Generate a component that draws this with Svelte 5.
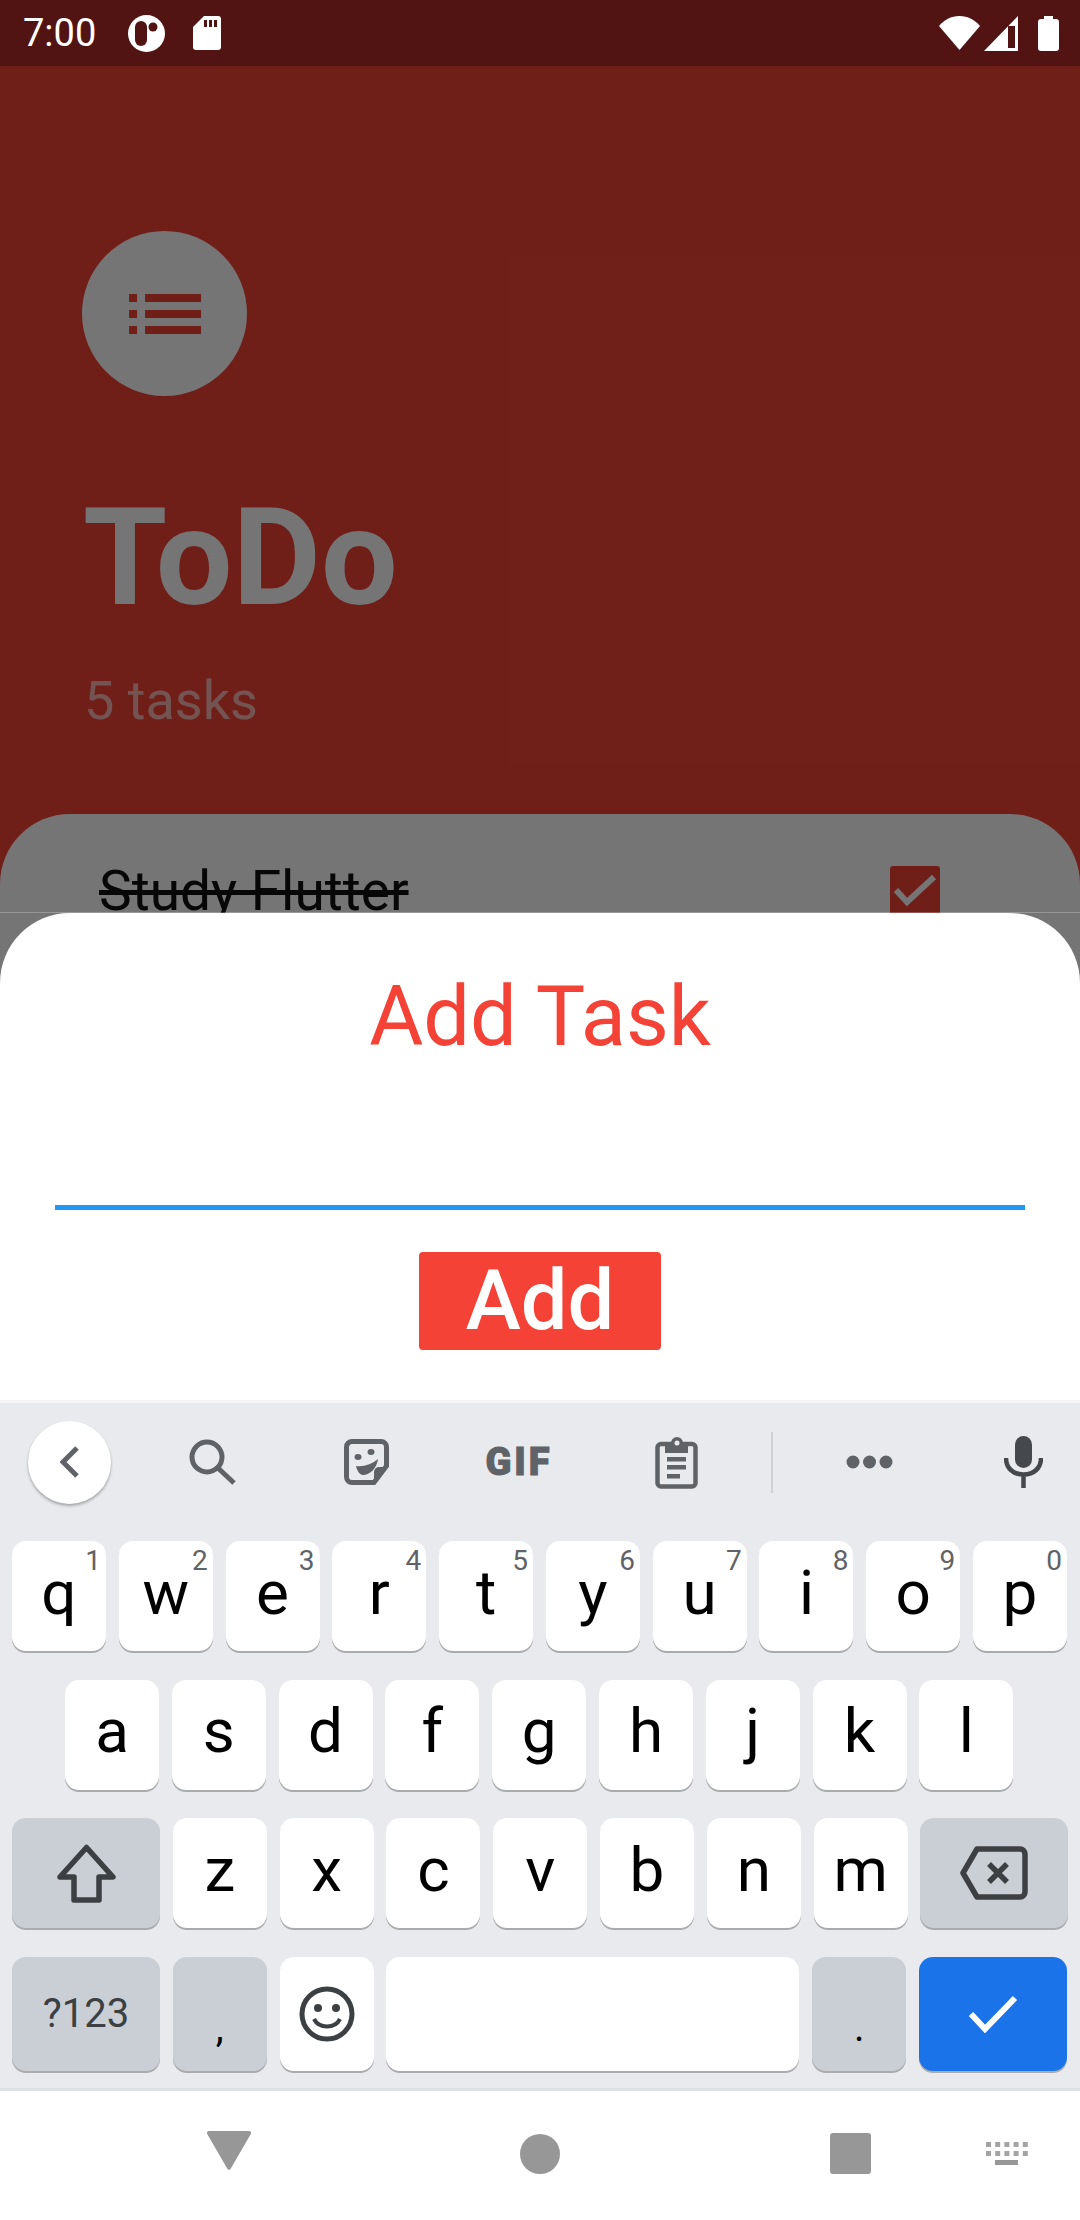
<script>
    const rowOne = [["q","1"],["w","2"],["e","3"],["r","4"],["t","5"],["y","6"],["u","7"],["i","8"],["o","9"],["p","0"]];
    const rowTwo = ["a","s","d","f","g","h","j","k","l"];
    const rowThree = ["z","x","c","v","b","n","m"];
</script>

<div class="page">
    <div class="statusBar">
        <span class="time">7:00</span>
        <svg class="statusApp" width="37" height="37" viewBox="0 0 37 37">
            <circle cx="18.5" cy="18.5" r="18.5" fill="#fff"></circle>
            <rect x="7" y="6" width="12" height="25" rx="6" fill="#511412"></rect>
            <circle cx="25" cy="12" r="4.5" fill="#511412"></circle>
        </svg>
        <svg class="statusSd" width="28" height="34" viewBox="0 0 28 34">
            <path d="M11 0H25a3 3 0 0 1 3 3V31a3 3 0 0 1-3 3H3a3 3 0 0 1-3-3V11Z" fill="#fff"></path>
            <rect x="11" y="4" width="3" height="7" fill="#511412"></rect>
            <rect x="16" y="4" width="3" height="7" fill="#511412"></rect>
            <rect x="21" y="4" width="3" height="7" fill="#511412"></rect>
        </svg>
        <div class="statusRight">
            <svg width="41" height="34" viewBox="0 0 41 34">
                <path d="M0 10C5 4 12 0 20.5 0S36 4 41 10L20.5 34Z" fill="#fff"></path>
            </svg>
            <svg width="34" height="35" viewBox="0 0 34 35">
                <path d="M34 0V35H0Z" fill="#fff"></path>
                <path d="M24 10H31V32H24Z" fill="#511412"></path>
            </svg>
            <svg width="21" height="35" viewBox="0 0 21 35">
                <path d="M6 0H15V3H18a3 3 0 0 1 3 3V32a3 3 0 0 1-3 3H3a3 3 0 0 1-3-3V6a3 3 0 0 1 3-3H6Z" fill="#fff"></path>
            </svg>
        </div>
    </div>

    <div class="app">
        <div class="header">
            <div class="logo">
                <svg width="96" height="96" viewBox="0 0 24 24">
                    <path d="M3 13h2v-2H3v2zm0 4h2v-2H3v2zm0-8h2V7H3v2zm4 4h14v-2H7v2zm0 4h14v-2H7v2zM7 7v2h14V7H7z" fill="#f44336"></path>
                </svg>
            </div>
            <h1>ToDo</h1>
            <p class="count">5 tasks</p>
        </div>
        <div class="list">
            <div class="task">
                <span class="taskName">Study Flutter</span>
                <span class="check">
                    <svg width="50" height="50" viewBox="0 0 50 50">
                        <path d="M6 24L17 36L44 11" fill="none" stroke="#fff" stroke-width="6"></path>
                    </svg>
                </span>
            </div>
        </div>
        <div class="scrim"></div>
    </div>

    <div class="overlay">
        <div class="sheetBack">
            <div class="sheet">
                <h2>Add Task</h2>
                <div class="field"></div>
                <button class="add">Add</button>
            </div>
        </div>

        <div class="keyboard">
            <div class="tools">
                <span class="tool"><span class="backCircle">
                    <svg width="19" height="32" viewBox="0 0 19 32"><path d="M17 2L3 16L17 30" fill="none" stroke="#5f6368" stroke-width="5"></path></svg>
                </span></span>
                <span class="tool">
                    <svg width="47" height="46" viewBox="0 0 47 46"><circle cx="18" cy="18" r="15" fill="none" stroke="#5f6368" stroke-width="5"></circle><path d="M29 29L45 44" stroke="#5f6368" stroke-width="5"></path></svg>
                </span>
                <span class="tool">
                    <svg width="45" height="46" viewBox="0 0 45 46">
                        <path d="M8 2.500H37a5.500 5.500 0 0 1 5.500 5.500V27L30 43.500H8A5.500 5.500 0 0 1 2.500 38V8A5.500 5.500 0 0 1 8 2.500Z" fill="none" stroke="#5f6368" stroke-width="5"></path>
                        <path d="M30 44V33a5 5 0 0 1 5-5H43Z" fill="#5f6368"></path>
                        <ellipse cx="14" cy="18" rx="3.500" ry="3" fill="#5f6368"></ellipse>
                        <ellipse cx="27" cy="13" rx="3.500" ry="3" fill="#5f6368"></ellipse>
                        <path d="M12 27C20 28 28 25 34 20C33 29 26 36 19 36C16 36 13 32 12 27Z" fill="#5f6368"></path>
                    </svg>
                </span>
                <span class="tool gif">GIF</span>
                <span class="tool">
                    <svg width="43" height="53" viewBox="0 0 43 53">
                        <path d="M6 8H37a3.500 3.500 0 0 1 3.500 3.500V47a3.500 3.500 0 0 1-3.500 3.500H6A3.500 3.500 0 0 1 2.500 47V11.500A3.500 3.500 0 0 1 6 8Z" fill="none" stroke="#5f6368" stroke-width="4.500"></path>
                        <path d="M10 7H16a6 6 0 0 1 12 0H33V17H10Z" fill="#5f6368"></path>
                        <circle cx="22" cy="7" r="2.500" fill="#e8eaed"></circle>
                        <rect x="12" y="21" width="19" height="4.500" fill="#5f6368"></rect>
                        <rect x="12" y="29" width="19" height="4.500" fill="#5f6368"></rect>
                        <rect x="12" y="38" width="13" height="4.500" fill="#5f6368"></rect>
                    </svg>
                </span>
                <span class="tool"><span class="toolDivider"></span></span>
                <span class="tool">
                    <svg width="47" height="14" viewBox="0 0 47 14"><circle cx="7" cy="7" r="6.500" fill="#5f6368"></circle><circle cx="23.500" cy="7" r="6.500" fill="#5f6368"></circle><circle cx="40" cy="7" r="6.500" fill="#5f6368"></circle></svg>
                </span>
                <span class="tool mic">
                    <svg width="39" height="52" viewBox="0 0 39 52">
                        <rect x="11" y="0" width="17" height="32" rx="8.500" fill="#45484c"></rect>
                        <path d="M2 22C2 32 9 38.500 19.500 38.500S37 32 37 22M19.500 38V52" fill="none" stroke="#45484c" stroke-width="4.500"></path>
                    </svg>
                </span>
            </div>

            <div class="rows">
                <div class="row">
                    {#each rowOne as key}
                        <div class="key letter"><span class="hint">{key[1]}</span>{key[0]}</div>
                    {/each}
                </div>
                <div class="row rowInset">
                    {#each rowTwo as key}
                        <div class="key letter">{key}</div>
                    {/each}
                </div>
                <div class="row">
                    <div class="key wide dark">
                        <svg width="61" height="59" viewBox="0 0 61 59"><path d="M30.500 3.500L57 33H43V56H18V33H4Z" fill="none" stroke="#3c4043" stroke-width="5.500" stroke-linejoin="round"></path></svg>
                    </div>
                    {#each rowThree as key}
                        <div class="key letter">{key}</div>
                    {/each}
                    <div class="key wide dark">
                        <svg width="68" height="54" viewBox="0 0 68 54">
                            <path d="M17 3H60a5 5 0 0 1 5 5V46a5 5 0 0 1-5 5H17L3 27Z" fill="none" stroke="#3c4043" stroke-width="5.500" stroke-linejoin="round"></path>
                            <path d="M29 18L47 36M47 18L29 36" fill="none" stroke="#3c4043" stroke-width="5.500"></path>
                        </svg>
                    </div>
                </div>
                <div class="row lastRow">
                    <div class="key wide dark symbols">?123</div>
                    <div class="key dark punct">,</div>
                    <div class="key">
                        <svg width="56" height="56" viewBox="0 0 56 56">
                            <circle cx="28" cy="28" r="25" fill="none" stroke="#3c4043" stroke-width="5"></circle>
                            <circle cx="19" cy="22" r="4" fill="#3c4043"></circle>
                            <circle cx="37" cy="22" r="4" fill="#3c4043"></circle>
                            <path d="M15 33C20 43 36 43 41 33" fill="none" stroke="#3c4043" stroke-width="4"></path>
                        </svg>
                    </div>
                    <div class="key space"></div>
                    <div class="key dark punct">.</div>
                    <div class="key wide enter">
                        <svg width="50" height="38" viewBox="0 0 50 38"><path d="M3 19L17 34L47 3" fill="none" stroke="#fff" stroke-width="6"></path></svg>
                    </div>
                </div>
            </div>
        </div>

        <div class="nav">
            <svg class="navBack" width="44" height="40" viewBox="0 0 44 40"><path d="M2 0H42a2 2 0 0 1 1.800 3L23.500 38a2 2 0 0 1-3 0L.2 3A2 2 0 0 1 2 0Z" fill="#979797"></path></svg>
            <span class="navHome"></span>
            <span class="navRecent"></span>
            <svg class="navKeys" width="42" height="23" viewBox="0 0 42 23">
                {#each [0,1] as y}
                    {#each [0,1,2,3,4] as x}
                        <rect x={x * 9.2} y={y * 9} width="5" height="5" fill="#a3a3a3"></rect>
                    {/each}
                {/each}
                <rect x="9" y="18" width="23" height="5" fill="#979797"></rect>
            </svg>
        </div>
    </div>
</div>

<style>
    :global(body){
        margin: 0;
        font-family: Roboto, "Liberation Sans", sans-serif;
    }

    .page{
        position: relative;
        display: flex;
        flex-direction: column;
        width: 1080px;
        height: 2220px;
        overflow: hidden;
        background: #f44336;
    }

    .statusBar{
        position: relative;
        z-index: 2;
        display: flex;
        align-items: center;
        height: 66px;
        padding: 0 21px 0 23px;
        box-sizing: border-box;
        background: #511412;
        color: #fff;
    }

    .time{
        font-size: 38px;
        width: 105px;
    }

    .statusApp{
        margin-bottom: -1px;
    }

    .statusSd{
        margin-left: 28px;
    }

    .statusRight{
        display: flex;
        align-items: center;
        gap: 4px;
        margin-left: auto;
    }

    .statusRight svg:last-child{
        margin-left: 16px;
    }

    .app{
        position: relative;
        display: flex;
        flex-direction: column;
        flex: 1;
    }

    .header{
        height: 748px;
        padding: 165px 0 0 82px;
        box-sizing: border-box;
        color: #fff;
    }

    .logo{
        display: flex;
        justify-content: center;
        align-items: center;
        width: 165px;
        height: 165px;
        border-radius: 50%;
        background: #fff;
    }

    h1{
        margin: 82px 0 0 1px;
        font-size: 136px;
        line-height: 160px;
        font-weight: 700;
    }

    .count{
        margin: 31px 0 0 2px;
        font-size: 54px;
        line-height: 63px;
        font-weight: 400;
        color: rgba(255, 255, 255, 0.62);
    }

    .list{
        flex: 1;
        background: #fff;
        border-radius: 70px 70px 0 0;
    }

    .task{
        display: flex;
        justify-content: space-between;
        padding: 44px 140px 0 99px;
    }

    .taskName{
        font-size: 55px;
        line-height: 66px;
        color: #111;
        text-decoration: line-through;
    }

    .check{
        display: flex;
        justify-content: center;
        align-items: center;
        width: 50px;
        height: 50px;
        margin-top: 8px;
        border-radius: 3px;
        background: #f44336;
    }

    .scrim{
        position: absolute;
        inset: 0;
        background: rgba(0, 0, 0, 0.54);
    }

    .overlay{
        position: absolute;
        top: 913px;
        left: 0;
        right: 0;
        bottom: 0;
        display: flex;
        flex-direction: column;
    }

    .sheetBack{
        background: #757575;
        box-shadow: 0 -1px 0 rgba(255, 255, 255, 0.25);
    }

    .sheet{
        height: 487px;
        padding: 55px 55px 0;
        box-sizing: border-box;
        display: flex;
        flex-direction: column;
        align-items: center;
        background: #fff;
        border-radius: 70px 70px 0 0;
    }

    h2{
        margin: 0;
        font-size: 83px;
        line-height: 98px;
        font-weight: 400;
        color: #f44336;
    }

    .field{
        align-self: stretch;
        height: 5px;
        margin-top: 139px;
        background: #2196f3;
    }

    .add{
        width: 242px;
        height: 98px;
        margin-top: 42px;
        padding: 0;
        border: none;
        border-radius: 4px;
        background: #f44336;
        color: #fff;
        font-family: inherit;
        font-size: 83px;
        line-height: 98px;
        font-weight: 500;
    }

    .keyboard{
        padding-bottom: 15px;
        background: #e8eaed;
        border-top: 3px solid #f5f5f5;
        border-bottom: 3px solid #dfe0e2;
    }

    .tools{
        display: grid;
        grid-template-columns: 138px 148px 160px 146px 168px 24px 170px 126px;
        align-items: start;
        height: 138px;
    }

    .tool{
        display: flex;
        justify-content: center;
        align-items: center;
        height: 118px;
    }

    .backCircle{
        display: flex;
        justify-content: center;
        align-items: center;
        width: 83px;
        height: 83px;
        border-radius: 50%;
        background: #fff;
        box-shadow: 0 2px 3px rgba(0, 0, 0, 0.3);
    }

    .gif{
        font-size: 38px;
        font-weight: 900;
        color: #5f6368;
        letter-spacing: 3px;
        -webkit-text-stroke: 1px #5f6368;
    }

    .toolDivider{
        width: 2px;
        height: 61px;
        background: #cfd1d5;
    }

    .mic{
        padding-left: 12px;
    }

    .rows{
        display: flex;
        flex-direction: column;
        gap: 26.67px;
        padding: 0 13px 0 12px;
    }

    .row{
        display: flex;
        gap: 12.8px;
        height: 112px;
    }

    .rowInset{
        padding: 0 53px;
    }

    .lastRow{
        height: 116px;
    }

    .key{
        position: relative;
        display: flex;
        justify-content: center;
        align-items: center;
        flex: 0 0 94px;
        min-width: 0;
        box-sizing: border-box;
        height: 110px;
        border-radius: 14px;
        background: #fff;
        box-shadow: 0 2px 0 #a9abae;
    }

    .row:first-child .key{
        flex: 1;
    }

    .lastRow .key{
        height: 114px;
    }

    .letter{
        padding-bottom: 7px;
        font-size: 62px;
        line-height: 72px;
        color: #000;
    }

    .hint{
        position: absolute;
        top: 3px;
        right: 5px;
        font-size: 28px;
        line-height: 33px;
        color: #5f6368;
    }

    .wide{
        flex: 0 0 148px;
    }

    .dark{
        background: #caced5;
    }

    .symbols{
        font-size: 40px;
        color: #3c4043;
    }

    .punct{
        padding-top: 28px;
        font-size: 40px;
        color: #000;
    }

    .space{
        flex: 1;
    }

    .enter{
        background: #1a73e8;
    }

    .nav{
        display: flex;
        align-items: center;
        flex: 1;
        padding: 0 0 3px 207px;
        background: #fff;
    }

    .navBack{
        margin-bottom: 5px;
    }

    .navHome{
        width: 40px;
        height: 40px;
        margin-left: 269px;
        border-radius: 50%;
        background: #979797;
    }

    .navRecent{
        width: 41px;
        height: 41px;
        margin-left: 270px;
        border-radius: 3px;
        background: #979797;
    }

    .navKeys{
        margin-left: 115px;
    }
</style>
